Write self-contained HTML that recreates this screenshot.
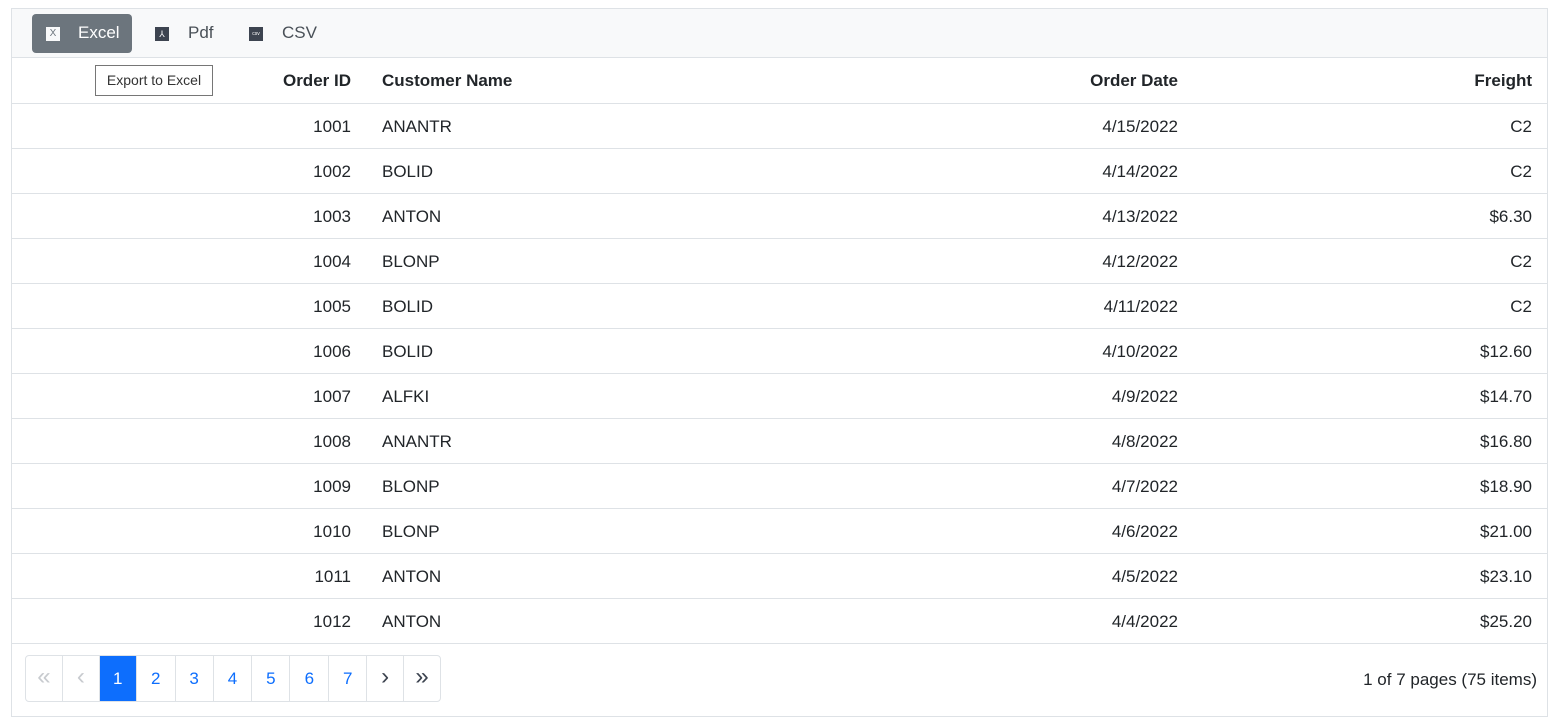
<!DOCTYPE html>
<html><head><style>
*{box-sizing:border-box}
body{margin:0;width:1556px;height:727px;background:#fff;font-family:"Liberation Sans",sans-serif;color:#212529;position:relative;overflow:hidden}
.box{position:absolute;left:11px;top:8px;width:1537px;height:709px;border:1px solid #dee2e6}
.tb{position:absolute;left:0;top:0;width:1535px;height:49px;background:#f8f9fa;border-bottom:1px solid #dee2e6}
.btn{position:absolute;top:5px;height:39px;font-size:17px;line-height:37px;color:#495057}
.ic{position:absolute;top:13px;width:14px;height:14px;background:#3d4450;color:#fff;font-size:5px;line-height:14px;text-align:center}
.row{position:absolute;left:0;width:1535px;height:45px;border-bottom:1px solid #dee2e6;font-size:17px;line-height:45px}
.row span{position:absolute}
.a{right:1196px}.b{left:370px}.c{right:369px}.d{right:15px}
.h{font-weight:bold;top:49px;height:46px;line-height:46px}
.pg{position:absolute;left:13px;top:646px;width:416px;height:47px;border:1px solid #dee2e6;border-radius:4px;display:flex;overflow:hidden}
.pg div{height:45px;line-height:45px;text-align:center;color:#0d6efd;font-size:17px;border-right:1px solid #dee2e6}
.pg .ch{font-size:24px;line-height:42px}
</style></head><body>
<div class="box">
<div class="tb">
<div class="btn" style="left:20px;width:100px;background:#6c757d;border-radius:4px;color:#fff"><div class="ic" style="left:14px;background:#f8f9fa;color:#6c757d;font-size:10px">X</div><span style="position:absolute;left:46px">Excel</span></div>
<div class="btn" style="left:143px"><div class="ic" style="left:0;font-size:9px">⅄</div><span style="position:absolute;left:33px">Pdf</span></div>
<div class="btn" style="left:237px"><div class="ic" style="left:0">csv</div><span style="position:absolute;left:33px">CSV</span></div>
</div>
<div class="row h"><span class="a">Order ID</span><span class="b">Customer Name</span><span class="c">Order Date</span><span class="d">Freight</span></div>
<div class="row" style="top:95px"><span class="a">1001</span><span class="b">ANANTR</span><span class="c">4/15/2022</span><span class="d">C2</span></div>
<div class="row" style="top:140px"><span class="a">1002</span><span class="b">BOLID</span><span class="c">4/14/2022</span><span class="d">C2</span></div>
<div class="row" style="top:185px"><span class="a">1003</span><span class="b">ANTON</span><span class="c">4/13/2022</span><span class="d">$6.30</span></div>
<div class="row" style="top:230px"><span class="a">1004</span><span class="b">BLONP</span><span class="c">4/12/2022</span><span class="d">C2</span></div>
<div class="row" style="top:275px"><span class="a">1005</span><span class="b">BOLID</span><span class="c">4/11/2022</span><span class="d">C2</span></div>
<div class="row" style="top:320px"><span class="a">1006</span><span class="b">BOLID</span><span class="c">4/10/2022</span><span class="d">$12.60</span></div>
<div class="row" style="top:365px"><span class="a">1007</span><span class="b">ALFKI</span><span class="c">4/9/2022</span><span class="d">$14.70</span></div>
<div class="row" style="top:410px"><span class="a">1008</span><span class="b">ANANTR</span><span class="c">4/8/2022</span><span class="d">$16.80</span></div>
<div class="row" style="top:455px"><span class="a">1009</span><span class="b">BLONP</span><span class="c">4/7/2022</span><span class="d">$18.90</span></div>
<div class="row" style="top:500px"><span class="a">1010</span><span class="b">BLONP</span><span class="c">4/6/2022</span><span class="d">$21.00</span></div>
<div class="row" style="top:545px"><span class="a">1011</span><span class="b">ANTON</span><span class="c">4/5/2022</span><span class="d">$23.10</span></div>
<div class="row" style="top:590px"><span class="a">1012</span><span class="b">ANTON</span><span class="c">4/4/2022</span><span class="d">$25.20</span></div>
<div class="pg">
<div class="ch" style="width:37px;color:#c8cbcf">«</div><div class="ch" style="width:37px;color:#c8cbcf">‹</div>
<div style="width:37px;background:#0d6efd;color:#fff">1</div>
<div style="width:39px">2</div><div style="width:38px">3</div><div style="width:39px">4</div><div style="width:38px">5</div><div style="width:39px">6</div><div style="width:38px">7</div>
<div class="ch" style="width:37px;color:#3d4450">›</div><div class="ch" style="width:36px;color:#3d4450;border:0">»</div>
</div>
<div style="position:absolute;right:10px;top:661px;font-size:17px">1 of 7 pages (75 items)</div>
</div>
<div style="position:absolute;left:95px;top:65px;width:118px;height:31px;border:1px solid #767676;background:#fff;font-size:14px;line-height:29px;text-align:center;color:#333">Export to Excel</div>
</body></html>
